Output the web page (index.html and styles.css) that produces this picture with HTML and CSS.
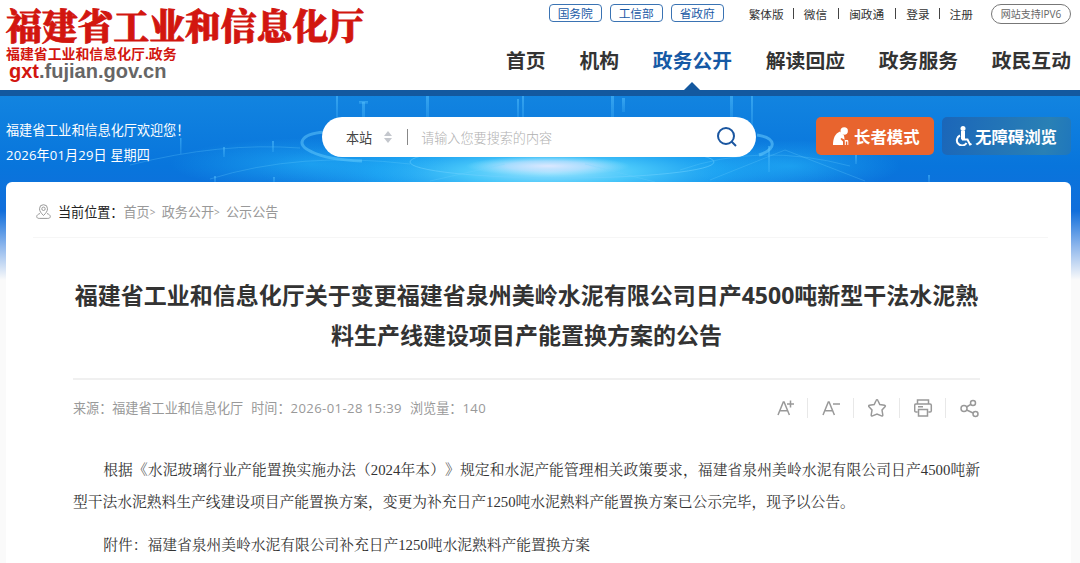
FILE: index.html
```
<!DOCTYPE html>
<html lang="zh-CN">
<head>
  <meta charset="UTF-8">
  <title>福建省工业和信息化厅</title>
  <link rel="stylesheet" href="styles.css">
</head>
<body>

  <header class="header">
    <div class="logo">
      <div class="logo-name">福建省工业和信息化厅</div>
      <div class="logo-sub">福建省工业和信息化厅.政务</div>
      <div class="logo-url"><span>gxt</span>.fujian.gov.cn</div>
    </div>
    <div class="header-right">
      <div class="top-links">
        <a class="tag">国务院</a>
        <a class="tag">工信部</a>
        <a class="tag">省政府</a>
        <div class="links">
          <a>繁体版</a><i></i><a>微信</a><i class="wide"></i><a>闽政通</a><i class="wide"></i><a>登录</a><i></i><a>注册</a>
        </div>
        <a class="ipv6">网站支持IPV6</a>
      </div>
      <nav class="nav">
        <a>首页</a>
        <a>机构</a>
        <a class="active">政务公开</a>
        <a>解读回应</a>
        <a>政务服务</a>
        <a>政民互动</a>
      </nav>
    </div>
  </header>

  <main class="page">
    <!-- 横幅背景 -->
    <svg class="banner-bg" viewBox="0 0 1080 86" preserveAspectRatio="none">
      <defs>
        <radialGradient id="glow">
          <stop offset="0" stop-color="#9fe4ff"/>
          <stop offset=".3" stop-color="#4fd0fd" stop-opacity=".9"/>
          <stop offset=".6" stop-color="#24b4fa" stop-opacity=".65"/>
          <stop offset="1" stop-color="#1688e6" stop-opacity="0"/>
        </radialGradient>
        <radialGradient id="core">
          <stop offset="0" stop-color="#dce8ff"/>
          <stop offset=".5" stop-color="#c5e2ff" stop-opacity=".7"/>
          <stop offset="1" stop-color="#9fe4ff" stop-opacity="0"/>
        </radialGradient>
        <radialGradient id="haze">
          <stop offset="0" stop-color="#25b5fa" stop-opacity=".6"/>
          <stop offset="1" stop-color="#25b5fa" stop-opacity="0"/>
        </radialGradient>
        <linearGradient id="beam" x1="0" y1="0" x2="0" y2="1">
          <stop offset="0" stop-color="#58c4ff" stop-opacity=".5"/>
          <stop offset="1" stop-color="#58c4ff" stop-opacity=".2"/>
        </linearGradient>
      </defs>
      <ellipse cx="550" cy="76" rx="290" ry="42" fill="url(#glow)"/>
      <ellipse cx="310" cy="68" rx="140" ry="26" fill="url(#haze)"/>
      <ellipse cx="790" cy="70" rx="110" ry="26" fill="url(#haze)"/>
      <ellipse cx="548" cy="70" rx="82" ry="10" fill="url(#core)"/>
      <g fill="none" stroke="#6fd2ff">
        <path d="M324 36c-24 2-29 13-12 20 10 5 26 8 50 9" stroke-width="3" opacity=".45"/>
        <path d="M757 39c20 3 20 14 2 20" stroke-width="3" opacity=".5"/>
        <ellipse cx="562" cy="66" rx="152" ry="16" opacity=".5"/>
        <path d="M130 69q90-23 170-17M210 83q90-28 200-15M680 74q80-28 170-4M710 84l75-30 80 31M430 85l75-17M655 86l-70-18" opacity=".25"/>
      </g>
      <g fill="url(#beam)">
        <rect x="336" y="0" width="2" height="24"/>
        <rect x="362" y="6" width="3" height="22"/>
        <rect x="359" y="5" width="9" height="3"/>
        <rect x="426" y="0" width="3" height="25"/>
        <rect x="517" y="3" width="2" height="20"/>
        <rect x="522" y="0" width="2" height="25"/>
        <rect x="611" y="0" width="3" height="25"/>
        <rect x="622" y="2" width="3" height="14"/>
        <rect x="730" y="0" width="3" height="24"/>
        <rect x="751" y="0" width="2" height="34"/>
        <rect x="180" y="42" width="1.500" height="16"/>
        <rect x="223" y="51" width="2" height="10"/>
        <rect x="272" y="45" width="2" height="11"/>
        <rect x="214" y="80" width="2" height="6"/>
        <rect x="273" y="81" width="2" height="5"/>
        <rect x="768" y="50" width="2" height="26"/>
        <rect x="855" y="59" width="2" height="9"/>
        <rect x="928" y="79" width="2" height="7"/>
      </g>
    </svg>

    <div class="banner">
      <div class="welcome">
        <div>福建省工业和信息化厅欢迎您！</div>
        <div class="date">2026年01月29日 星期四</div>
      </div>
      <div class="search">
        <span class="scope">本站</span>
        <svg class="arrows" width="8" height="12" viewBox="0 0 8 12"><path d="M4 0l4 5H0zM4 12l4-5H0z" fill="#c4c7cd"/></svg>
        <span class="split"></span>
        <span class="placeholder">请输入您要搜索的内容</span>
        <svg width="22" height="22" viewBox="0 0 22 22" fill="none" stroke="#1a56a0" stroke-width="2"><circle cx="10" cy="10" r="8"/><path d="M15.500 15.500l4.500 4.500"/></svg>
      </div>
      <a class="btn elder">
        <svg width="17" height="19" viewBox="0 0 17 19" fill="#fff"><circle cx="12.200" cy="4" r="3.700"/><path d="M8 4.500C3 6.500 1 11.500 1 18h10v-3.500l-2.500-2.500 1-1 3.500 2H15c1 0 1.300.5 1.300 1.500V18h-1v-3.500h-1.500V18h-1v-4L12 8.500z"/></svg>
        长者模式
      </a>
      <a class="btn access">
        <svg width="17" height="20" viewBox="0 0 17 20" fill="none" stroke="#fff" stroke-width="2"><circle cx="8" cy="2.500" r="2.500" fill="#fff" stroke="none"/><path d="M8 5v8.500" stroke-width="4"/><path d="M7 13.500h5.500l2.500 5 1.500-.7"/><path d="M5 9.500a5.200 5.200 0 1 0 6.500 7.500"/></svg>
        无障碍浏览
      </a>
    </div>

    <div class="card">
      <div class="crumbs">
        <svg width="15" height="15" viewBox="0 0 15 15" fill="none" stroke="#999"><path d="M7.500 11.500C5 9 3.500 7.200 3.500 4.700a4 4 0 0 1 8 0c0 2.500-1.500 4.300-4 6.800z"/><circle cx="7.500" cy="4.800" r="1.700"/><path d="M4 9.500c-2 .7-3.300 1.800-3.300 3 0 1.300 1 1.900 2.500 1.900h8.600c1.500 0 2.500-.6 2.500-1.900 0-1.200-1.300-2.300-3.300-3"/></svg>
        <span class="here">当前位置：</span><a>首页</a><b>&gt;</b><a>政务公开</a><b>&gt;</b><a>公示公告</a>
      </div>

      <article class="article">
        <h1>福建省工业和信息化厅关于变更福建省泉州美岭水泥有限公司日产4500吨新型干法水泥熟<br>料生产线建设项目产能置换方案的公告</h1>
        <div class="meta">
          <span>来源：福建省工业和信息化厅</span>
          <span>时间：<em>2026-01-28 15:39</em></span>
          <span>浏览量：<em>140</em></span>
          <div class="tools">
            <svg viewBox="0 0 20 20"><path d="M2 17L7.300 4h.8L13.400 17M3.800 12.700h7.800M11 6h7M14.500 2.500v7"/></svg>
            <svg viewBox="0 0 20 20"><path d="M1 17L6.300 4h.8L12.400 17M2.800 12.700h7.800M11 6h7"/></svg>
            <svg viewBox="0 0 20 20"><path d="M9 1.800q.6 0 .9.700l1.900 4 4.700.8q1.500.4.500 1.500l-3 3.200.8 5q0 1.400-1.300.9L9 16l-4.500 1.900q-1.300.5-1.300-.9l.8-5-3-3.200q-1-1.100.5-1.500l4.700-.8 1.900-4q.3-.7.900-.7z"/></svg>
            <svg viewBox="1 0 20 20"><path d="M4.500 6V2h11v4M4.500 14H3q-1.300 0-1.300-1.300V7.300Q1.700 6 3 6h14q1.300 0 1.300 1.300v5.400Q18.300 14 17 14h-1.500M5.500 11.500h9V18h-9zM5 8.700h5"/></svg>
            <svg viewBox="0 0 20 20"><circle cx="4" cy="10.500" r="3"/><circle cx="13" cy="5" r="2.500"/><circle cx="15.500" cy="16" r="2.500"/><path d="M6.500 9l4.300-2.700M6.700 12l6.400 3"/></svg>
          </div>
        </div>
        <div class="content">
          <p>根据《水泥玻璃行业产能置换实施办法（2024年本）》规定和水泥产能管理相关政策要求，福建省泉州美岭水泥有限公司日产4500吨新型干法水泥熟料生产线建设项目产能置换方案，变更为补充日产1250吨水泥熟料产能置换方案已公示完毕，现予以公告。</p>
          <p>附件：福建省泉州美岭水泥有限公司补充日产1250吨水泥熟料产能置换方案</p>
        </div>
      </article>
    </div>
  </main>

</body>
</html>
```
FILE: styles.css
```
* {
  box-sizing: border-box;
}

body {
  margin: 0;
  height: 563px;
  overflow: hidden;
  background: #fff;
  color: #333;
  font-family: "Open Sans", "Noto Sans CJK SC", sans-serif;
  font-size: 13.1px;
  white-space: nowrap;
  text-spacing-trim: space-all;
}

svg {
  flex-shrink: 0;
}

.header {
  height: 90px;
  display: flex;
  justify-content: space-between;
  padding: 0 9px 0 6px;
}

.logo {
  color: #d2160f;
  font-weight: bold;
}

.logo-name {
  font-family: "Noto Serif CJK SC", "Noto Sans CJK SC", serif;
  font-weight: 900;
  font-size: 35.8px;
  line-height: 40px;
  padding-top: 5px;
  -webkit-text-stroke: 0.8px #d2160f;
}

.logo-sub {
  padding-top: 1px;
  font-family: "Liberation Sans", "Noto Sans CJK SC", sans-serif;
  font-size: 13.9px;
  line-height: 16px;
}

.logo-url {
  font-family: "Liberation Sans", sans-serif;
  font-size: 20px;
  line-height: 18px;
  padding-left: 3px;
  color: #666;
}

.logo-url span {
  color: #d2160f;
}

.header-right {
  width: 565px;
}

.top-links {
  display: flex;
  justify-content: flex-end;
  height: 28px;
  padding-top: 4px;
  font-size: 11.7px;
  line-height: 19px;
}

.tag {
  width: 53px;
  height: 18px;
  margin-right: 8px;
  border: 1px solid #3a73b3;
  border-radius: 4px;
  color: #1a5aa6;
  text-align: center;
  line-height: 17px;
}

.links {
  display: flex;
  align-items: center;
  height: 20px;
  margin: 0 18px 0 17px;
}

.links i {
  width: 1px;
  height: 11px;
  margin: 0 10px 2px 9px;
  background: #444;
}

.links .wide {
  margin-left: 11px;
}

.ipv6 {
  width: 80px;
  height: 20px;
  border: 1px solid #777;
  border-radius: 10px;
  color: #666;
  font-size: 10px;
  text-align: center;
  line-height: 18px;
}

.nav {
  display: flex;
  justify-content: space-between;
  height: 62px;
  font-size: 19.8px;
  font-weight: bold;
  line-height: 65px;
}

.nav .active {
  position: relative;
  color: #1659a5;
}

.nav .active::after {
  content: "";
  position: absolute;
  left: 50%;
  bottom: 0;
  margin-left: -8px;
  border: 8px solid transparent;
  border-top: 0;
  border-bottom-color: #13589f;
}

.page {
  position: relative;
  height: 473px;
  padding: 0 9px 0 6px;
  border-top: 6px solid #13589f;
  background: linear-gradient(#1284e0, #0875dc 70px, #116edb 115px, #8db6ec 150px, #fafafa 184px);
}

.banner-bg {
  position: absolute;
  left: 0;
  top: 0;
  width: 100%;
  height: 86px;
}

.banner {
  position: relative;
  display: flex;
  align-items: flex-start;
  height: 86px;
  padding-top: 21px;
  color: #fff;
}

.welcome {
  width: 316px;
  padding-top: 1px;
  line-height: 25px;
}

.date {
  letter-spacing: 0.15px;
}

.search {
  display: flex;
  align-items: center;
  width: 434px;
  height: 40px;
  padding: 0 18px 0 24px;
  border-radius: 20px;
  background: #fff;
}

.scope {
  color: #444;
}

.arrows {
  margin-left: 12px;
}

.split {
  width: 1px;
  height: 16px;
  margin: 0 13px 0 15px;
  background: #888;
}

.placeholder {
  flex: 1;
  color: #b0b0b0;
  font-weight: 300;
}

.btn {
  display: flex;
  align-items: center;
  height: 38px;
  border-radius: 5px;
  font-size: 16.4px;
  font-weight: bold;
}

.elder {
  width: 118px;
  margin-left: 60px;
  padding-left: 16px;
  gap: 5px;
  background: #e8642e;
}

.access {
  width: 129px;
  margin-left: 8px;
  padding-left: 13px;
  gap: 3px;
  background: linear-gradient(100deg, #1b66b9, #2980b5 80%, #1f77bd);
}

.card {
  position: relative;
  height: 381px;
  padding: 0 23px 0 27px;
  border-radius: 6px 6px 0 0;
  background: #fff;
}

.crumbs {
  display: flex;
  align-items: center;
  height: 56px;
  padding: 4px 0 0 3px;
  border-bottom: 1px solid #f6f6f6;
  color: #999;
}

.here {
  margin-left: 7px;
  color: #222;
}

.crumbs b {
  width: 12px;
  font-size: 10px;
  font-weight: normal;
}

.article {
  margin: 0 68px 0 40px;
}

h1 {
  margin: 0;
  height: 142px;
  padding-top: 37px;
  border-bottom: 2px solid #f0f0f0;
  font-size: 23px;
  line-height: 40px;
  text-align: center;
}

.meta {
  display: flex;
  align-items: center;
  gap: 8px;
  height: 56px;
  color: #999;
}

.meta > span {
  padding-bottom: 1px;
}

.meta em {
  font-style: normal;
  letter-spacing: 0.4px;
}

.tools {
  display: flex;
  margin-left: auto;
}

.tools svg {
  width: 20px;
  height: 20px;
  fill: none;
  stroke: #999;
  stroke-width: 1.5;
}

.tools svg + svg {
  box-sizing: content-box;
  margin-left: 11px;
  padding-left: 14px;
  border-left: 1px solid #e8e8e8;
}

.content {
  padding-top: 19px;
  font-family: "Liberation Serif", "Noto Serif CJK SC", "Noto Sans CJK SC", serif;
  font-size: 14.75px;
  line-height: 31.5px;
}

.content p {
  margin: 0 0 12px;
  text-indent: 2.05em;
  text-align: justify;
  white-space: normal;
}
```
